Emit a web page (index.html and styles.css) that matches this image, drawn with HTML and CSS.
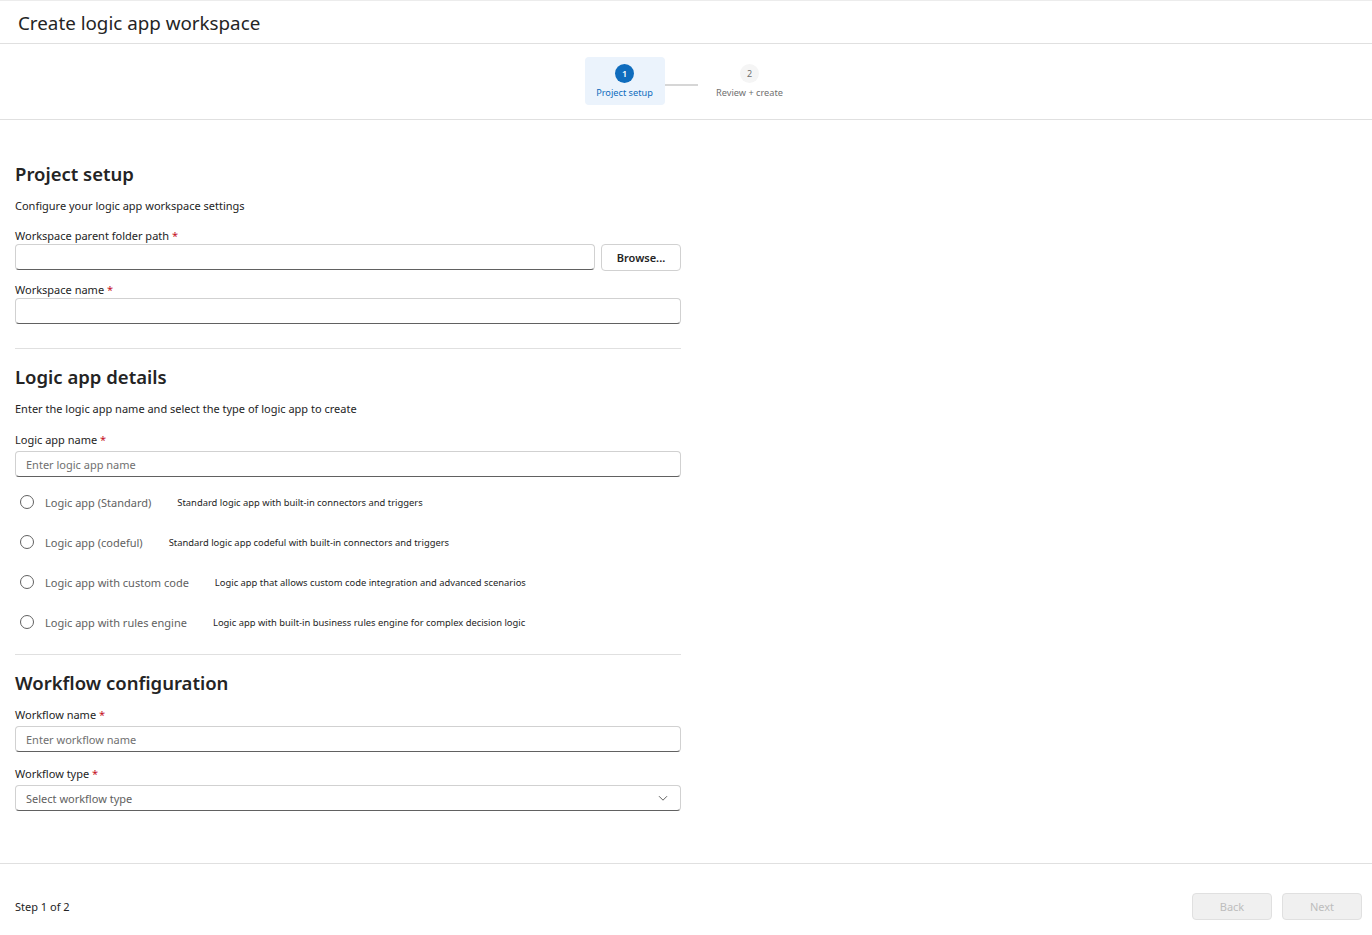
FILE: index.html
```html
<!DOCTYPE html>
<html lang="en">
<head>
  <meta charset="UTF-8">
  <meta name="viewport" content="width=device-width, initial-scale=1">
  <title>Create logic app workspace</title>
  <link rel="stylesheet" href="styles.css">
</head>
<body>
  <div class="page">
    <header class="titlebar">
      <h1>Create logic app workspace</h1>
    </header>

    <nav class="stepper">
      <div class="step activo">
        <span class="circulo">1</span>
        <span class="etiqueta">Project setup</span>
      </div>
      <div class="conector"></div>
      <div class="step">
        <span class="circulo">2</span>
        <span class="etiqueta">Review + create</span>
      </div>
    </nav>

    <main class="contenido">
      <section class="seccion">
        <h2>Project setup</h2>
        <p class="desc">Configure your logic app workspace settings</p>

        <label class="campo">
          <span class="label">Workspace parent folder path <em>*</em></span>
          <span class="fila">
            <input type="text" class="input">
            <button type="button" class="btn">Browse...</button>
          </span>
        </label>

        <label class="campo">
          <span class="label">Workspace name <em>*</em></span>
          <input type="text" class="input">
        </label>
      </section>

      <section class="seccion detalles">
        <h2>Logic app details</h2>
        <p class="desc">Enter the logic app name and select the type of logic app to create</p>

        <label class="campo">
          <span class="label">Logic app name <em>*</em></span>
          <input type="text" class="input" placeholder="Enter logic app name">
        </label>

        <div class="radios">
          <label class="radio"><span class="punto"></span><span class="rtexto">Logic app (Standard)</span><span class="rdesc">Standard logic app with built-in connectors and triggers</span></label>
          <label class="radio"><span class="punto"></span><span class="rtexto">Logic app (codeful)</span><span class="rdesc">Standard logic app codeful with built-in connectors and triggers</span></label>
          <label class="radio"><span class="punto"></span><span class="rtexto">Logic app with custom code</span><span class="rdesc">Logic app that allows custom code integration and advanced scenarios</span></label>
          <label class="radio"><span class="punto"></span><span class="rtexto">Logic app with rules engine</span><span class="rdesc">Logic app with built-in business rules engine for complex decision logic</span></label>
        </div>
      </section>

      <section class="seccion ultima">
        <h2>Workflow configuration</h2>

        <label class="campo">
          <span class="label">Workflow name <em>*</em></span>
          <input type="text" class="input" placeholder="Enter workflow name">
        </label>

        <label class="campo">
          <span class="label">Workflow type <em>*</em></span>
          <span class="select">
            <span class="placeholder">Select workflow type</span>
            <svg width="12" height="12" viewBox="0 0 12 12"><path d="M2 4.2l4 4 4-4" fill="none" stroke="#616161" stroke-width="1"/></svg>
          </span>
        </label>
      </section>
    </main>

    <footer class="pie">
      <span>Step 1 of 2</span>
      <div class="acciones">
        <button type="button" class="btn deshabilitado">Back</button>
        <button type="button" class="btn deshabilitado">Next</button>
      </div>
    </footer>
  </div>
</body>
</html>
```
FILE: styles.css
```css
body {
  margin: 0;
  padding: 0;
  font-family: 'Segoe UI', 'Noto Sans', sans-serif;
  color: #242424;
  background: #fff;
}

.page {
  height: 935px;
  display: flex;
  flex-direction: column;
  border-top: 1px solid #ececec;
  box-sizing: border-box;
}

.titlebar {
  flex: none;
  height: 41px;
  border-bottom: 1px solid #e0e0e0;
  padding: 1px 18px 0;
  display: flex;
  align-items: center;
}

.titlebar h1 {
  margin: 0;
  font-size: 18.8px;
  font-weight: 400;
}

.stepper {
  flex: none;
  height: 76px;
  box-sizing: border-box;
  border-bottom: 1px solid #e0e0e0;
  display: flex;
  justify-content: center;
  align-items: flex-start;
  padding-top: 13px;
  padding-left: 2px;
}

.step {
  width: 80px;
  height: 48px;
  border-radius: 4px;
  display: flex;
  flex-direction: column;
  align-items: center;
  padding-top: 7px;
  box-sizing: border-box;
  gap: 4px;
}

.step .circulo {
  width: 19px;
  height: 19px;
  border-radius: 50%;
  background: #f5f5f5;
  color: #707070;
  font-size: 9px;
  display: flex;
  align-items: center;
  justify-content: center;
}

.step .etiqueta {
  font-size: 9.2px;
  line-height: 12px;
  color: #707070;
  white-space: nowrap;
}

.step.activo {
  background: #ebf3fc;
}

.step.activo .circulo {
  background: #0f6cbd;
  color: #fff;
  font-weight: 600;
}

.step.activo .etiqueta {
  color: #0f6cbd;
}

.conector {
  width: 33px;
  height: 2px;
  background: #d6d6d6;
  margin-top: 27px;
  margin-right: 12px;
}

.contenido {
  flex: 1;
  padding: 40px 15px 0;
  width: 666px;
}

.seccion {
  border-bottom: 1px solid #e0e0e0;
  padding-bottom: 24px;
  margin-bottom: 14px;
}

.seccion.ultima {
  border-bottom: none;
}

h2 {
  margin: 0 0 10px;
  font-size: 18.5px;
  font-weight: 600;
  line-height: 28px;
}

.desc {
  margin: 0 0 14px;
  font-size: 11px;
  line-height: 16px;
}

.campo {
  display: block;
  margin-bottom: 11px;
}

.campo:last-child {
  margin-bottom: 0;
}

.label {
  display: block;
  font-size: 11px;
  line-height: 16px;
}

.label em {
  font-style: normal;
  color: #c50f1f;
}

.detalles .desc {
  margin-bottom: 15px;
}

.detalles .label {
  margin-bottom: 3px;
}

.ultima .campo {
  margin-bottom: 14px;
}

.ultima .label {
  margin-bottom: 3px;
}

.fila {
  display: flex;
  gap: 6px;
}

.input {
  display: block;
  box-sizing: border-box;
  width: 100%;
  height: 26px;
  border: 1px solid #d1d1d1;
  border-bottom-color: #616161;
  border-radius: 4px;
  padding: 0 10px;
  font-family: inherit;
  font-size: 11px;
  color: #242424;
  background: #fff;
}

.input::placeholder {
  color: #707070;
}

.btn {
  flex: none;
  width: 80px;
  height: 27px;
  border: 1px solid #d1d1d1;
  border-radius: 4px;
  background: #fff;
  font-family: inherit;
  font-size: 11px;
  font-weight: 600;
  color: #242424;
}

.radios {
  display: flex;
  flex-direction: column;
  gap: 24px;
  padding: 6px 0 0 5px;
}

.radio {
  display: flex;
  align-items: center;
  height: 16px;
}

.punto {
  width: 12px;
  height: 12px;
  border: 1px solid #616161;
  border-radius: 50%;
  margin-right: 11px;
}

.rtexto {
  font-size: 11px;
  color: #616161;
  margin-right: 26px;
}

.rdesc {
  font-size: 9.4px;
  color: #242424;
}

.select {
  display: flex;
  align-items: center;
  justify-content: space-between;
  box-sizing: border-box;
  height: 26px;
  border: 1px solid #d1d1d1;
  border-bottom-color: #616161;
  border-radius: 4px;
  padding: 0 11px 0 10px;
  font-size: 11px;
  color: #616161;
}

.pie {
  flex: none;
  height: 73px;
  border-top: 1px solid #e0e0e0;
  box-sizing: border-box;
  display: flex;
  align-items: center;
  justify-content: space-between;
  padding: 13px 10px 0 15px;
  font-size: 11px;
}

.acciones {
  display: flex;
  gap: 10px;
}

.btn.deshabilitado {
  background: #f0f0f0;
  border-color: #e0e0e0;
  color: #bdbdbd;
  font-weight: 400;
}
```
